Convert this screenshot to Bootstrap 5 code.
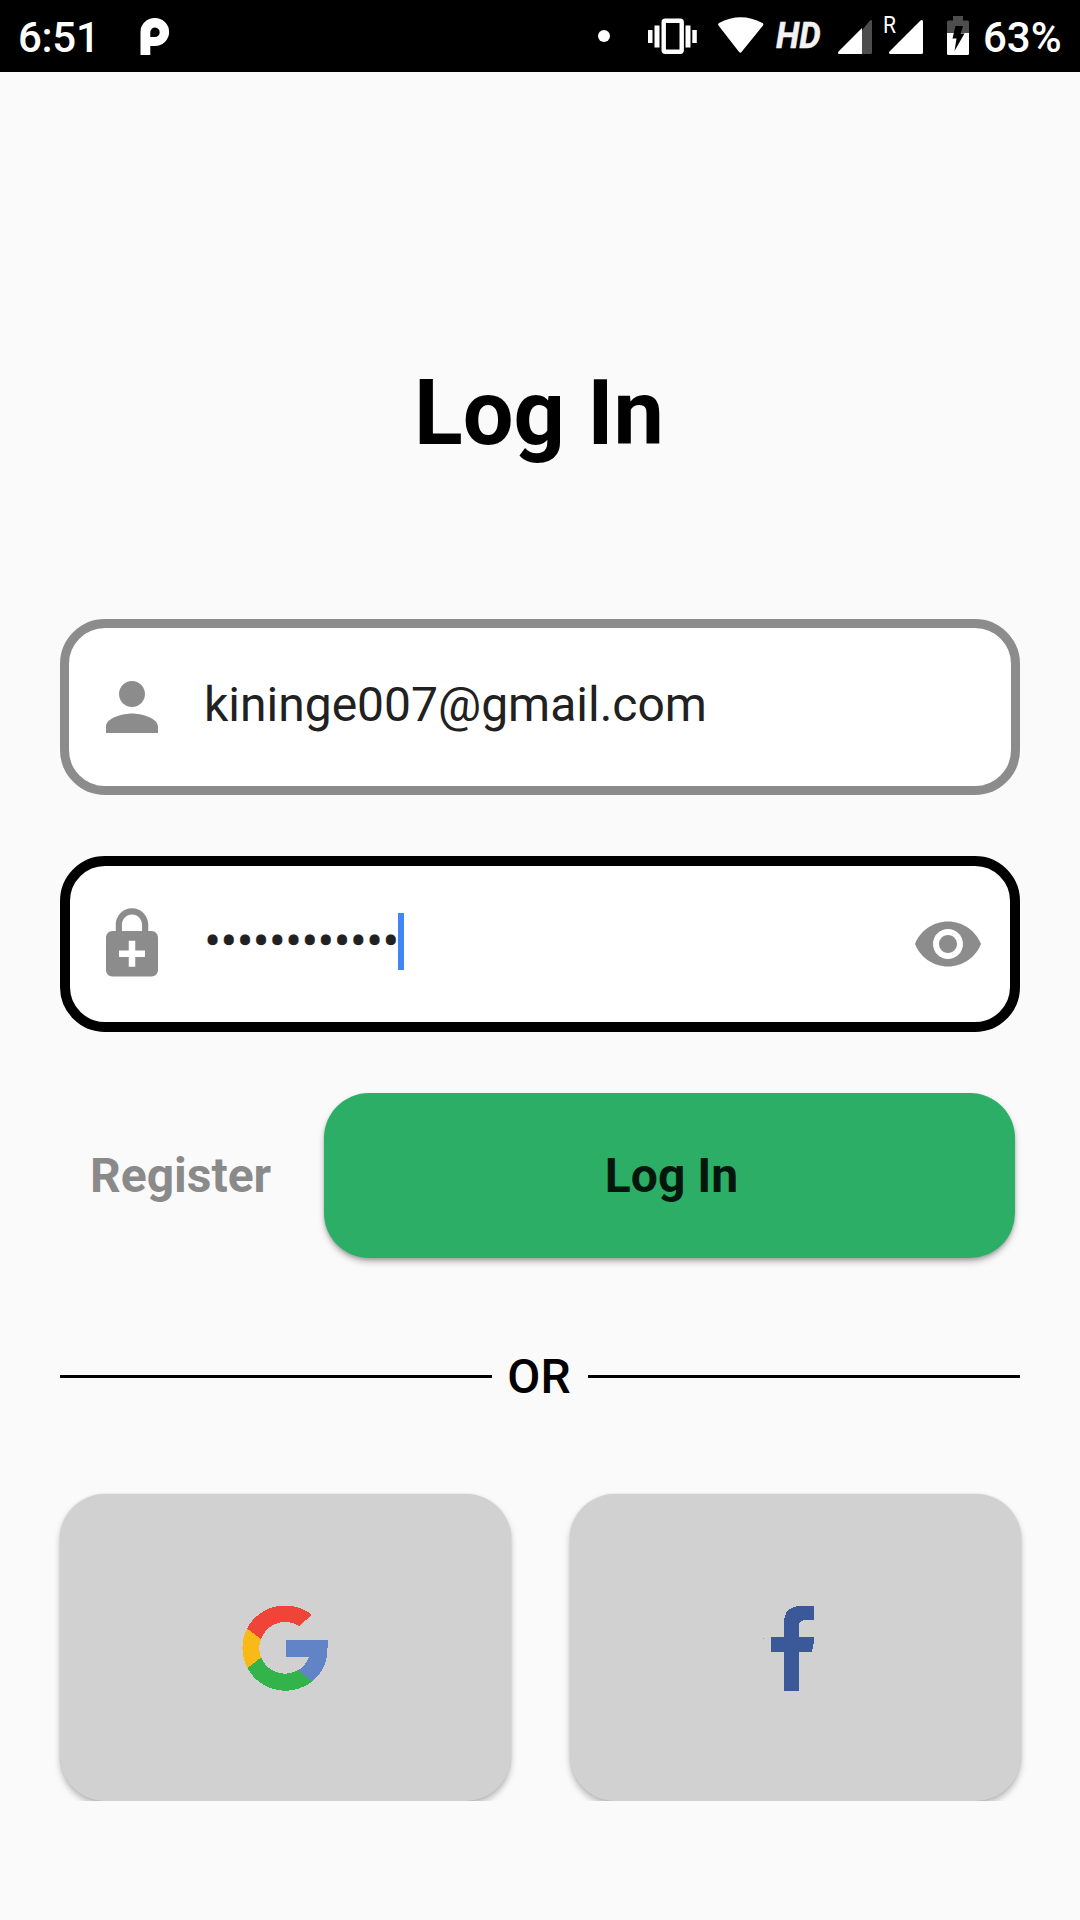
<!DOCTYPE html>
<html lang="en">
<head>
<meta charset="utf-8">
<meta name="viewport" content="width=device-width, initial-scale=1">
<title>Log In</title>
<link href="https://cdn.jsdelivr.net/npm/bootstrap@5.3.0/dist/css/bootstrap.min.css" rel="stylesheet">
<style>
body{background:#fafafa;font-family:Roboto,"Liberation Sans",sans-serif;color:#000;font-size:48px;line-height:56px;min-height:1920px;overflow:hidden}
svg{display:block;flex:none}
.statusbar{height:72px;background:#000;color:#fff;font-size:42px;font-weight:500;line-height:72px;padding:0 20px 0 18px;white-space:nowrap}
.clock{width:122px;padding-top:2px;letter-spacing:-.3px}
.hd{width:61px;font-size:37px;font-weight:700;font-style:italic;padding-left:12px;line-height:72px;color:#f2f2f2}
.hd span{display:inline-block;transform:scaleX(.92);transform-origin:0 50%;-webkit-text-stroke:.5px #f2f2f2}
.pct{width:77px;margin-left:12px;padding-top:2px}
.roam{font:400 24px/28px Roboto,sans-serif;fill:#fff}
.screen{padding:289px 60px 0}
.title{font-size:90px;font-weight:700;line-height:106px;margin:0 2px 152px 0}
.field{height:176px;border:9px solid #8c8c8c;border-radius:45px;background:#fff;color:#212121;padding:0 30px 0 24px}
.field.active{border:10px solid #000;margin-top:61px;padding:0 26px 0 23px}
.field .value{margin-left:33px;padding-bottom:4px}
.field .dots{-webkit-text-stroke:.4px #212121;padding-left:.5px}
.field svg{fill:#8c8c8c}
.caret{width:6px;height:57px;background:#4285f4;margin-bottom:5px;margin-left:-.5px}
.actions{margin-top:61px;padding-right:5px}
.register{width:264px;padding:1px 0 0;color:#8a8a8a;font-size:48px;line-height:56px;font-weight:700;border:0;text-align:left;padding-left:30px}
.login{height:165px;border:0;border-radius:45px;background:#2dae67;color:#04170d;font-size:48px;line-height:56px;font-weight:700;padding:1px 0 0 4px;box-shadow:0 4px 6px rgba(0,0,0,.25),0 2px 3px rgba(0,0,0,.14)}
.or{margin-top:90px;font-weight:500}
.rule{height:3px;background:#000}
.or span{width:96px;padding:1px 2px 0 0;margin-bottom:-1px}
.socials{margin:90px -1px 0 0;gap:59px;height:307px;clip-path:inset(-20px -20px 0 -20px)}
.social{height:307px;border:0;border-radius:45px;background:#d1d1d1;flex:1 1 0;min-width:0;box-shadow:0 4px 6px rgba(0,0,0,.25),0 0 2px rgba(0,0,0,.12)}
</style>
<script src="https://cdn.jsdelivr.net/npm/bootstrap@5.3.0/dist/js/bootstrap.bundle.min.js"></script>
</head>
<body>
<header class="statusbar d-flex">
  <div class="clock">6:51</div>
  <svg width="30" height="72" viewBox="140 0 30 72"><path fill="#fff" fill-rule="evenodd" d="M140.500 55V32a14.300 14 0 1 1 14.300 14H150.300V55ZM150.300 37V32a4.700 4.700 0 1 1 4.700 5Z"/></svg>
  <svg class="ms-auto" width="12" height="72" viewBox="598 0 12 72"><circle cx="604" cy="36" r="6" fill="#fff"/></svg>
  <svg width="108" height="72" viewBox="610 0 108 72" fill="#fff"><path d="M648 30h4.500v13H648zM654.500 25.500h5v22h-5zM685.500 25.500h5v22h-5zM692.300 30h4.500v13h-4.500z"/><rect x="663.700" y="20.700" width="18" height="31" rx="1.500" fill="none" stroke="#fff" stroke-width="4.400"/></svg>
  <svg width="46" height="72" viewBox="718 0 46 72"><path fill="#fff" d="M718.500 25.500Q717.500 24 719 23Q740.500 11.500 762.500 23Q764 24 763 25.500L741.500 52q-1.200 1.500-2.400 0Z"/></svg>
  <div class="hd"><span>HD</span></div>
  <svg width="122" height="72" viewBox="825 0 122 72"><path fill="#4d4d4d" d="M862 30.300 869.500 21Q872 19 872 21.500V52.500Q872 54 870.500 54H862Z"/><path fill="#fff" d="M862 28V54H839.500Q837 53.500 838.500 51.500ZM923 22V52.500Q923 54 921.500 54H890.500Q888 53.500 889.500 51.500L920.500 20.500Q923 19 923 22Z"/><text class="roam" x="883" y="32.500" textLength="13" lengthAdjust="spacingAndGlyphs">R</text></svg>
  <svg width="24" height="72" viewBox="947 0 24 72"><path fill="#4d4d4d" d="M953 16H963V20.500H967.500Q969 20.500 969 22V33H947V22Q947 20.500 948.500 20.500H953Z"/><path fill="#fff" d="M947 33H969V53.500Q969 55 967.500 55H948.500Q947 55 947 53.500Z"/><path d="M955.500 26H963L960.700 33.500H964.500L954.500 51L956.500 38.500H952.500Z"/></svg>
  <div class="pct">63%</div>
</header>

<main class="screen">
  <h1 class="title text-center">Log In</h1>
  <div class="field d-flex align-items-center">
    <svg width="78" height="78" viewBox="0 0 24 24"><path d="M12 12c2.210 0 4-1.790 4-4s-1.790-4-4-4-4 1.790-4 4 1.790 4 4 4zm0 2c-2.670 0-8 1.340-8 4v2h16v-2c0-2.660-5.330-4-8-4z"/></svg>
    <div class="value">kininge007@gmail.com</div>
  </div>
  <div class="field active d-flex align-items-center">
    <svg width="78" height="78" viewBox="0 0 24 24"><path d="M18 8h-1V6c0-2.760-2.240-5-5-5S7 3.240 7 6v2H6c-1.100 0-2 .9-2 2v10c0 1.100.9 2 2 2h12c1.100 0 2-.9 2-2V10c0-1.100-.9-2-2-2zM8.900 6c0-1.710 1.390-3.100 3.100-3.100s3.100 1.390 3.100 3.100v2H8.900V6zM16 16h-3v3h-2v-3H8v-2h3v-3h2v3h3v2z"/></svg>
    <div class="value dots">••••••••••••</div>
    <div class="caret"></div>
    <svg class="ms-auto" width="72" height="72" viewBox="0 0 24 24"><path d="M12 4.500C7 4.500 2.730 7.610 1 12c1.730 4.390 6 7.500 11 7.500s9.270-3.110 11-7.500c-1.730-4.390-6-7.500-11-7.500zM12 17c-2.760 0-5-2.240-5-5s2.240-5 5-5 5 2.240 5 5-2.240 5-5 5zm0-8c-1.660 0-3 1.340-3 3s1.340 3 3 3 3-1.340 3-3-1.340-3-3-3z"/></svg>
  </div>
  <div class="actions d-flex align-items-center">
    <button type="button" class="register btn">Register</button>
    <button type="button" class="login btn flex-fill">Log In</button>
  </div>
  <div class="or d-flex align-items-center">
    <div class="rule flex-fill"></div><span class="text-center">OR</span><div class="rule flex-fill"></div>
  </div>
  <div class="socials d-flex">
    <button type="button" class="social btn p-0 d-flex align-items-center justify-content-center" aria-label="Google">
      <svg width="87" height="86" viewBox="0 0 87 86" shape-rendering="crispEdges"><path fill="#ef4437" d="M5 23.500A43 43 0 0 1 70 10L57 21A25.700 25.700 0 0 0 19 34Z"/><path fill="#f9b917" d="M5 23.500A43 43 0 0 0 5.500 63L19 52.500A26 26 0 0 1 19 34Z"/><path fill="#32b44a" d="M5.500 63A43 43 0 0 0 70 76.500L56 65A25.700 25.700 0 0 1 19 52.500Z"/><path fill="#6184c6" d="M43.500 35H85.500V43A43 43 0 0 1 70 76.500L56 65.500Q64 60 67 52H43.500Z"/></svg>
    </button>
    <button type="button" class="social btn p-0 d-flex align-items-center justify-content-center" aria-label="Facebook">
      <svg width="65" height="86" viewBox="763 1605 65 86" shape-rendering="crispEdges"><path fill="#9b9fa8" d="M763 1638h1v1h-1z"/><path fill="#3b5998" d="M771 1637H784V1623Q784 1606 801 1606H814V1620H806Q799 1620 799 1626V1637H814V1641L812 1652H799V1691H783.500V1652H771Z"/></svg>
    </button>
  </div>
</main>
</body>
</html>
